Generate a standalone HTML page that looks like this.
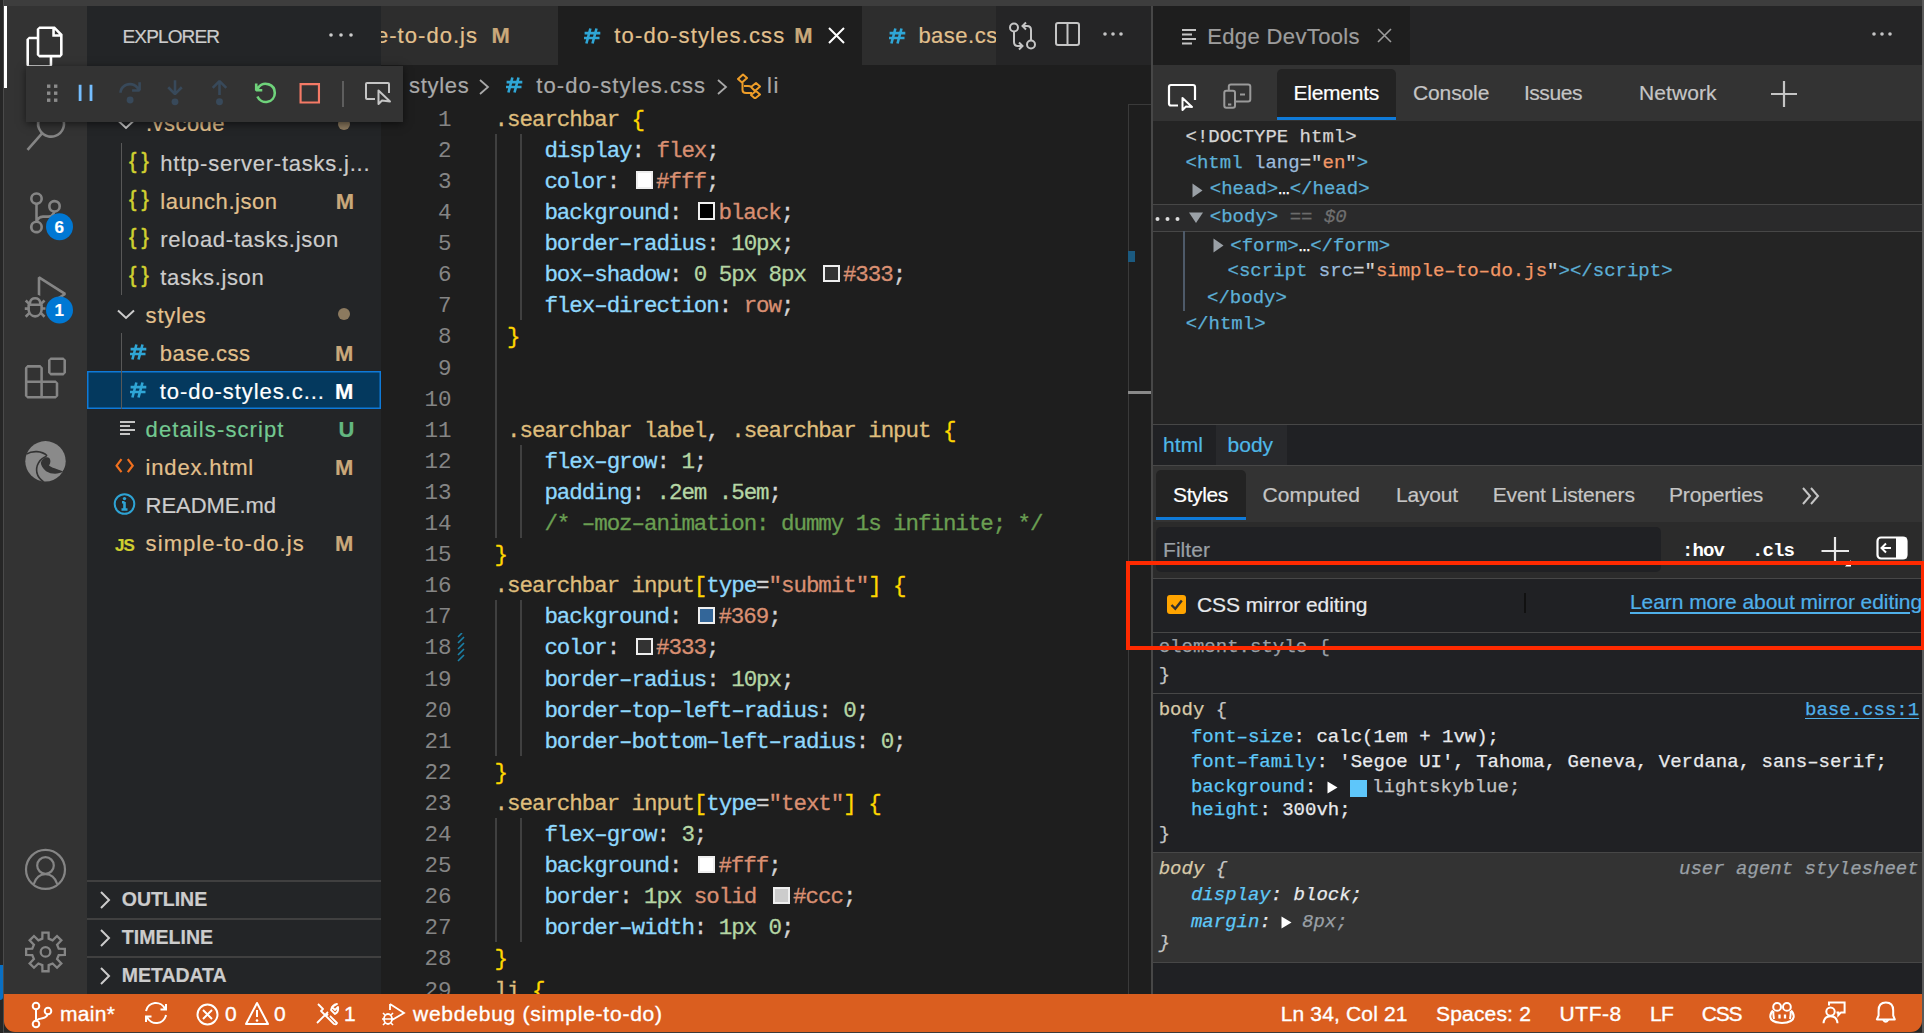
<!DOCTYPE html><html><head><meta charset="utf-8"><style>
*{margin:0;padding:0;box-sizing:content-box}
html,body{width:1924px;height:1033px;overflow:hidden;background:#262626}
body{position:relative;font-family:"Liberation Sans",sans-serif}
.t{position:absolute;white-space:pre}
.ln{position:absolute;left:0;width:70.5px;text-align:right;font-family:"Liberation Mono",monospace;font-size:22.5px;line-height:22.5px;color:#858585;letter-spacing:0;white-space:pre}
.cl{position:absolute;-webkit-text-stroke:0.3px currentColor;font-family:"Liberation Mono",monospace;font-size:22.5px;line-height:22.5px;color:#d4d4d4;letter-spacing:-1.050px;white-space:pre}
.sw{display:inline-block;width:13.3px;height:13.3px;border:2px solid #eeeeee;margin:0 3.05px 0 4.2px;vertical-align:-0.7px;box-sizing:content-box}
.dm{position:absolute;-webkit-text-stroke:0.25px currentColor;font-family:"Liberation Mono",monospace;font-size:19px;line-height:19px;letter-spacing:0.010px;white-space:pre;color:#e8eaed}
</style></head><body><div style="position:absolute;left:0px;top:0px;width:1924px;height:1033px;background:#262626;"></div>
<div style="position:absolute;left:3px;top:0px;width:1px;height:1033px;background:#4a4a4a;"></div>
<div style="position:absolute;left:0px;top:965px;width:3px;height:35px;background:#0a6fc2;border-radius:0 0 3px 0;"></div>
<div style="position:absolute;left:4px;top:0px;width:1918px;height:6px;background:#3d3d3d;"></div>
<div style="position:absolute;left:1922px;top:0px;width:2px;height:1033px;background:#5a5a5a;"></div>
<div style="position:absolute;left:4px;top:6px;width:83px;height:988px;background:#333333;"></div>
<div style="position:absolute;left:4px;top:6px;width:3px;height:82px;background:#ffffff;"></div>
<div style="position:absolute;left:87px;top:6px;width:294px;height:988px;background:#232527;"></div>
<div style="position:absolute;left:381px;top:6px;width:770px;height:988px;background:#1e1e1e;"></div>
<div style="position:absolute;left:1151px;top:6px;width:2px;height:988px;background:#474747;"></div>
<div style="position:absolute;left:1153px;top:6px;width:769px;height:988px;background:#202124;"></div>
<svg style="position:absolute;left:0px;top:0px;" width="90" height="1000" viewBox="0 0 90 1000" fill="none">
<g transform="translate(24.68,26.4) scale(1.724)" fill="#ffffff"><path d="M17.5 0h-9L7 1.5V6H2.5L1 7.5v15.07L2.5 24h12.07L16 22.57V18h4.7l1.3-1.43V4.5L17.5 0zm0 2.12l2.38 2.38H17.5V2.12zm-3 20.38h-12v-15H7v9.07L8.5 18h6v4.5zm6-6h-12v-15H16V6h4.5v10.5z"/></g>
<g transform="translate(24.81,109.48) scale(1.724)" fill="#858585"><path d="M15.25 0a8.25 8.25 0 0 0-6.18 13.72L1 22.88l1.12 1 8.05-9.12A8.251 8.251 0 1 0 15.25.01V0zm0 15a6.75 6.75 0 1 1 0-13.5 6.75 6.75 0 0 1 0 13.5z"/></g>
<g transform="translate(24.76,192.16) scale(1.724)" fill="#858585"><path d="M21.007 8.222A3.738 3.738 0 0 0 15.045 5.2a3.737 3.737 0 0 0 1.156 6.583 2.988 2.988 0 0 1-2.668 1.67h-2.99a4.456 4.456 0 0 0-2.989 1.165V7.4a3.737 3.737 0 1 0-1.494 0v9.117a3.776 3.776 0 1 0 1.816.099 2.99 2.99 0 0 1 2.668-1.667h2.99a4.484 4.484 0 0 0 4.223-3.039 3.736 3.736 0 0 0 3.25-3.687zM4.565 3.738a2.242 2.242 0 1 1 4.484 0 2.242 2.242 0 0 1-4.484 0zm4.484 16.441a2.242 2.242 0 1 1-4.484 0 2.242 2.242 0 0 1 4.484 0zm8.221-9.715a2.242 2.242 0 1 1 0-4.485 2.242 2.242 0 0 1 0 4.485z"/></g>
<g transform="translate(24.78,276.3) scale(1.724)" fill="#858585"><path d="M10.94 13.5l-1.32 1.32a3.73 3.73 0 0 0-7.24 0L1.06 13.5 0 14.56l1.72 1.72-.22.22V18H0v1.5h1.5v.08c.077.489.214.966.41 1.42L0 22.94 1.06 24l1.65-1.65A4.308 4.308 0 0 0 6 24a4.31 4.31 0 0 0 3.29-1.65L10.94 24 12 22.94 10.09 21c.198-.464.336-.951.41-1.45v-.1H12V18h-1.5v-1.5l-.22-.22L12 14.56l-1.06-1.06zM6 13.5a2.25 2.25 0 0 1 2.25 2.25h-4.5A2.25 2.25 0 0 1 6 13.5zm3 6a3.33 3.33 0 0 1-3 3 3.33 3.33 0 0 1-3-3v-2.25h6v2.25zm14.76-9.9v1.26L13.5 17.37V15.6l8.5-5.37L9 2v9.46a5.07 5.07 0 0 0-1.5-.72V.63L8.64 0l15.12 9.6z"/></g>
<g transform="translate(24.9,357.4) scale(1.712)" fill="#858585"><path d="M13.5 1.5L15 0h7.5L24 1.5V9l-1.5 1.5H15L13.5 9V1.5zm1.5 0V9h7.5V1.5H15zM0 15V6l1.5-1.5H9L10.5 6v7.5H18l1.5 1.5v7.5L18 24H1.5L0 22.5V15zm9-1.5V6H1.5v7.5H9zM9 15H1.5v7.5H9V15zm1.5 7.5H18V15h-7.5v7.5z"/></g>
<circle cx="59.5" cy="226.8" r="13.5" fill="#0078d4"/>
<circle cx="59.5" cy="310" r="13.5" fill="#0078d4"/>
<circle cx="45.5" cy="461.3" r="20.2" fill="#8a8a8a"/>
<path d="M26.3,454.2 C32.1,450.5 41.8,450.5 47.1,455.8" stroke="#333" stroke-width="1.6"/>
<path d="M46.6,456.3 C39.4,458.7 35.5,466 36.9,472.8 C37.9,477.1 40.8,480 43.7,481.9" stroke="#333" stroke-width="1.6"/>
<path d="M40.8,462.4 C42.7,457.8 47.1,455.8 49.5,458.3 C51,460.2 50.5,463.6 49,465.5 C51.5,468 56.8,468.4 63.1,471.6 C58.7,474.3 51.5,474.6 46.1,471.2 C42.7,468.4 40.8,465 40.8,462.4 Z" fill="#333"/>
<path d="M62.5,471.6 L66.5,465.5 L67,475 Z" fill="#333"/>
<circle cx="45.5" cy="869.4" r="19.5" stroke="#858585" stroke-width="2.2"/>
<circle cx="45.5" cy="865.5" r="8.3" stroke="#858585" stroke-width="2.2"/>
<path d="M33.8,884 C36,877.5 40,874.2 45.5,874.2 C51,874.2 55,877.5 57.2,884" stroke="#858585" stroke-width="2.2"/>
<path d="M42.33,938.68 L42.43,932.54 L48.57,932.54 L48.67,938.68 L52.61,940.30 L57.02,936.04 L61.36,940.38 L57.10,944.79 L58.72,948.73 L64.86,948.83 L64.86,954.97 L58.72,955.07 L57.10,959.01 L61.36,963.42 L57.02,967.76 L52.61,963.50 L48.67,965.12 L48.57,971.26 L42.43,971.26 L42.33,965.12 L38.39,963.50 L33.98,967.76 L29.64,963.42 L33.90,959.01 L32.28,955.07 L26.14,954.97 L26.14,948.83 L32.28,948.73 L33.90,944.79 L29.64,940.38 L33.98,936.04 L38.39,940.30Z" stroke="#858585" stroke-width="2.3" stroke-linejoin="miter"/>
<circle cx="45.5" cy="951.9" r="4.8" stroke="#858585" stroke-width="2.3"/>
</svg>
<div class="t" style="left:54.5px;top:219.11px;font-size:17px;line-height:17px;color:#fff;font-family:'Liberation Sans',sans-serif;font-weight:700;letter-spacing:0.000px;-webkit-text-stroke:0.2px currentColor;">6</div>
<div class="t" style="left:54.5px;top:302.41px;font-size:17px;line-height:17px;color:#fff;font-family:'Liberation Sans',sans-serif;font-weight:700;letter-spacing:0.000px;-webkit-text-stroke:0.2px currentColor;">1</div>
<div class="t" style="left:122.5px;top:26.91px;font-size:19px;line-height:19px;color:#cccccc;font-family:'Liberation Sans',sans-serif;font-weight:400;letter-spacing:-0.860px;-webkit-text-stroke:0.2px currentColor;">EXPLORER</div>
<svg style="position:absolute;left:326px;top:28px;" width="30" height="12" viewBox="0 0 30 12" fill="none"><circle cx="5" cy="7" r="1.8" fill="#ccc"/><circle cx="15" cy="7" r="1.8" fill="#ccc"/><circle cx="25" cy="7" r="1.8" fill="#ccc"/></svg>
<div style="position:absolute;left:87px;top:371px;width:294px;height:38px;background:#04395e;box-shadow: inset 0 0 0 1.5px #0f7ad8;"></div>
<div style="position:absolute;left:121px;top:143px;width:1.2px;height:152px;background:#585858;"></div>
<div style="position:absolute;left:121px;top:333px;width:1.2px;height:76px;background:#585858;"></div>
<svg style="position:absolute;left:116px;top:117px;" width="20" height="14" viewBox="0 0 20 14" fill="none"><path d="M2,3.5 L10,11 L18,3.5" stroke="#cccccc" stroke-width="2"/></svg>
<div class="t" style="left:146px;top:113.07px;font-size:22px;line-height:22px;color:#e2c08d;font-family:'Liberation Sans',sans-serif;font-weight:400;letter-spacing:0.454px;-webkit-text-stroke:0.2px currentColor;">.vscode</div>
<svg style="position:absolute;left:337px;top:117px;" width="14" height="14" viewBox="0 0 14 14" fill="none"><circle cx="7" cy="7" r="6" fill="#8c7a5f"/></svg>
<div class="t" style="left:129px;top:149.97px;font-size:22px;line-height:22px;color:#d0d030;font-family:'Liberation Sans',sans-serif;font-weight:400;letter-spacing:-0.500px;-webkit-text-stroke:0.5px currentColor;">{ }</div>
<div class="t" style="left:160.3px;top:152.57px;font-size:22px;line-height:22px;color:#cccccc;font-family:'Liberation Sans',sans-serif;font-weight:400;letter-spacing:0.766px;-webkit-text-stroke:0.2px currentColor;">http-server-tasks.j...</div>
<div class="t" style="left:129px;top:187.97px;font-size:22px;line-height:22px;color:#d0d030;font-family:'Liberation Sans',sans-serif;font-weight:400;letter-spacing:-0.500px;-webkit-text-stroke:0.5px currentColor;">{ }</div>
<div class="t" style="left:160.3px;top:190.57px;font-size:22px;line-height:22px;color:#e2c08d;font-family:'Liberation Sans',sans-serif;font-weight:400;letter-spacing:0.545px;-webkit-text-stroke:0.2px currentColor;">launch.json</div>
<div class="t" style="left:335.7px;top:190.57px;font-size:22px;line-height:22px;color:#c9a87a;font-family:'Liberation Sans',sans-serif;font-weight:700;letter-spacing:-2.027px;-webkit-text-stroke:0.2px currentColor;">M</div>
<div class="t" style="left:129px;top:225.97px;font-size:22px;line-height:22px;color:#d0d030;font-family:'Liberation Sans',sans-serif;font-weight:400;letter-spacing:-0.500px;-webkit-text-stroke:0.5px currentColor;">{ }</div>
<div class="t" style="left:160.3px;top:228.57px;font-size:22px;line-height:22px;color:#cccccc;font-family:'Liberation Sans',sans-serif;font-weight:400;letter-spacing:0.729px;-webkit-text-stroke:0.2px currentColor;">reload-tasks.json</div>
<div class="t" style="left:129px;top:263.97px;font-size:22px;line-height:22px;color:#d0d030;font-family:'Liberation Sans',sans-serif;font-weight:400;letter-spacing:-0.500px;-webkit-text-stroke:0.5px currentColor;">{ }</div>
<div class="t" style="left:160.3px;top:266.57px;font-size:22px;line-height:22px;color:#cccccc;font-family:'Liberation Sans',sans-serif;font-weight:400;letter-spacing:0.618px;-webkit-text-stroke:0.2px currentColor;">tasks.json</div>
<svg style="position:absolute;left:116px;top:307px;" width="20" height="14" viewBox="0 0 20 14" fill="none"><path d="M2,3.5 L10,11 L18,3.5" stroke="#cccccc" stroke-width="2"/></svg>
<div class="t" style="left:145.6px;top:304.57px;font-size:22px;line-height:22px;color:#e2c08d;font-family:'Liberation Sans',sans-serif;font-weight:400;letter-spacing:0.794px;-webkit-text-stroke:0.2px currentColor;">styles</div>
<svg style="position:absolute;left:337px;top:307px;" width="14" height="14" viewBox="0 0 14 14" fill="none"><circle cx="7" cy="7" r="6" fill="#8c7a5f"/></svg>
<svg style="position:absolute;left:129px;top:343px;" width="19" height="19" viewBox="0 0 19 19" fill="none"><path d="M7.4,1.5 L3.4,16.5 M13.5,1.5 L9.5,16.5 M1.6,6.1 H17.3 M1,11 H16.5" stroke="#2fa6d6" stroke-width="2.6"/></svg>
<div class="t" style="left:159.8px;top:342.57px;font-size:22px;line-height:22px;color:#e2c08d;font-family:'Liberation Sans',sans-serif;font-weight:400;letter-spacing:0.498px;-webkit-text-stroke:0.2px currentColor;">base.css</div>
<div class="t" style="left:335px;top:342.57px;font-size:22px;line-height:22px;color:#c9a87a;font-family:'Liberation Sans',sans-serif;font-weight:700;letter-spacing:-1.327px;-webkit-text-stroke:0.2px currentColor;">M</div>
<svg style="position:absolute;left:129px;top:381px;" width="19" height="19" viewBox="0 0 19 19" fill="none"><path d="M7.4,1.5 L3.4,16.5 M13.5,1.5 L9.5,16.5 M1.6,6.1 H17.3 M1,11 H16.5" stroke="#2fa6d6" stroke-width="2.6"/></svg>
<div class="t" style="left:159.8px;top:380.57px;font-size:22px;line-height:22px;color:#ffffff;font-family:'Liberation Sans',sans-serif;font-weight:400;letter-spacing:0.932px;-webkit-text-stroke:0.2px currentColor;">to-do-styles.c...</div>
<div class="t" style="left:335px;top:380.57px;font-size:22px;line-height:22px;color:#ffffff;font-family:'Liberation Sans',sans-serif;font-weight:700;letter-spacing:-1.327px;-webkit-text-stroke:0.2px currentColor;">M</div>
<svg style="position:absolute;left:119px;top:420px;" width="18" height="16" viewBox="0 0 18 16" fill="none"><path d="M1,2 H16 M1,6 H11 M1,10 H16 M1,14 H11" stroke="#c5c5c5" stroke-width="2"/></svg>
<div class="t" style="left:145.6px;top:418.57px;font-size:22px;line-height:22px;color:#73c991;font-family:'Liberation Sans',sans-serif;font-weight:400;letter-spacing:1.108px;-webkit-text-stroke:0.2px currentColor;">details-script</div>
<div class="t" style="left:338.6px;top:418.57px;font-size:22px;line-height:22px;color:#63b680;font-family:'Liberation Sans',sans-serif;font-weight:700;letter-spacing:-2.488px;-webkit-text-stroke:0.2px currentColor;">U</div>
<svg style="position:absolute;left:114px;top:457px;" width="22" height="18" viewBox="0 0 22 18" fill="none"><path d="M7.5,2.2 L2.6,8.7 L7.5,15.2 M13.8,2.2 L18.7,8.7 L13.8,15.2" stroke="#f0701f" stroke-width="2.2"/></svg>
<div class="t" style="left:145.6px;top:456.57px;font-size:22px;line-height:22px;color:#e2c08d;font-family:'Liberation Sans',sans-serif;font-weight:400;letter-spacing:0.813px;-webkit-text-stroke:0.2px currentColor;">index.html</div>
<div class="t" style="left:335px;top:456.57px;font-size:22px;line-height:22px;color:#c9a87a;font-family:'Liberation Sans',sans-serif;font-weight:700;letter-spacing:-1.327px;-webkit-text-stroke:0.2px currentColor;">M</div>
<svg style="position:absolute;left:112px;top:492px;" width="24" height="24" viewBox="0 0 24 24" fill="none"><circle cx="12.5" cy="12" r="9.8" stroke="#2ea3d4" stroke-width="2"/><path d="M12.5,10 V17.5 M9.5,17.5 H15.5 M10,10.2 H12.5" stroke="#2ea3d4" stroke-width="2.6"/><circle cx="12.5" cy="6.6" r="1.7" fill="#2ea3d4"/></svg>
<div class="t" style="left:145.6px;top:494.57px;font-size:22px;line-height:22px;color:#cccccc;font-family:'Liberation Sans',sans-serif;font-weight:400;letter-spacing:-0.045px;-webkit-text-stroke:0.2px currentColor;">README.md</div>
<div class="t" style="left:115px;top:536.81px;font-size:17px;line-height:17px;color:#d0d030;font-family:'Liberation Sans',sans-serif;font-weight:700;letter-spacing:-0.897px;-webkit-text-stroke:0.2px currentColor;">JS</div>
<div class="t" style="left:145.6px;top:532.57px;font-size:22px;line-height:22px;color:#e2c08d;font-family:'Liberation Sans',sans-serif;font-weight:400;letter-spacing:1.077px;-webkit-text-stroke:0.2px currentColor;">simple-to-do.js</div>
<div class="t" style="left:335px;top:532.57px;font-size:22px;line-height:22px;color:#c9a87a;font-family:'Liberation Sans',sans-serif;font-weight:700;letter-spacing:-1.327px;-webkit-text-stroke:0.2px currentColor;">M</div>
<div style="position:absolute;left:87px;top:880px;width:294px;height:1.5px;background:#404040;"></div>
<svg style="position:absolute;left:98px;top:890px;" width="14" height="20" viewBox="0 0 14 20" fill="none"><path d="M3,2 L11,10 L3,18" stroke="#cccccc" stroke-width="2"/></svg>
<div class="t" style="left:121.8px;top:890.49px;font-size:19.5px;line-height:19.5px;color:#cccccc;font-family:'Liberation Sans',sans-serif;font-weight:700;letter-spacing:-0.040px;-webkit-text-stroke:0.2px currentColor;">OUTLINE</div>
<div style="position:absolute;left:87px;top:918px;width:294px;height:1.5px;background:#404040;"></div>
<svg style="position:absolute;left:98px;top:928px;" width="14" height="20" viewBox="0 0 14 20" fill="none"><path d="M3,2 L11,10 L3,18" stroke="#cccccc" stroke-width="2"/></svg>
<div class="t" style="left:121.8px;top:928.49px;font-size:19.5px;line-height:19.5px;color:#cccccc;font-family:'Liberation Sans',sans-serif;font-weight:700;letter-spacing:0.038px;-webkit-text-stroke:0.2px currentColor;">TIMELINE</div>
<div style="position:absolute;left:87px;top:956px;width:294px;height:1.5px;background:#404040;"></div>
<svg style="position:absolute;left:98px;top:966px;" width="14" height="20" viewBox="0 0 14 20" fill="none"><path d="M3,2 L11,10 L3,18" stroke="#cccccc" stroke-width="2"/></svg>
<div class="t" style="left:121.8px;top:966.49px;font-size:19.5px;line-height:19.5px;color:#cccccc;font-family:'Liberation Sans',sans-serif;font-weight:700;letter-spacing:-0.045px;-webkit-text-stroke:0.2px currentColor;">METADATA</div>
<div style="position:absolute;left:381px;top:6px;width:770px;height:59px;background:#252526;"></div>
<div style="position:absolute;left:381px;top:6px;width:177px;height:59px;background:#2d2d2d;"></div>
<div style="position:absolute;left:558px;top:6px;width:304px;height:59px;background:#1e1e1e;"></div>
<div style="position:absolute;left:862px;top:6px;width:134px;height:59px;background:#2d2d2d;"></div>
<div style="position:absolute;left:381px;top:6px;width:177px;height:59px;overflow:hidden">
<div class="t" style="left:-5px;top:19.07px;font-size:22px;line-height:22px;color:#e2c08d;font-family:'Liberation Sans',sans-serif;font-weight:400;letter-spacing:1.029px;-webkit-text-stroke:0.2px currentColor;">e-to-do.js</div>
<div class="t" style="left:110.6px;top:19.07px;font-size:22px;line-height:22px;color:#c9a87a;font-family:'Liberation Sans',sans-serif;font-weight:700;letter-spacing:-2.727px;-webkit-text-stroke:0.2px currentColor;">M</div>
</div>
<svg style="position:absolute;left:583px;top:26.700000000000003px;" width="19" height="19" viewBox="0 0 19 19" fill="none"><path d="M7.4,1.5 L3.4,16.5 M13.5,1.5 L9.5,16.5 M1.6,6.1 H17.3 M1,11 H16.5" stroke="#2fa6d6" stroke-width="2.6"/></svg>
<div class="t" style="left:614.3px;top:25.07px;font-size:22px;line-height:22px;color:#e2c08d;font-family:'Liberation Sans',sans-serif;font-weight:400;letter-spacing:1.136px;-webkit-text-stroke:0.2px currentColor;">to-do-styles.css</div>
<div class="t" style="left:794.3px;top:25.07px;font-size:22px;line-height:22px;color:#c9a87a;font-family:'Liberation Sans',sans-serif;font-weight:700;letter-spacing:-1.027px;-webkit-text-stroke:0.2px currentColor;">M</div>
<svg style="position:absolute;left:827px;top:26px;" width="19" height="19" viewBox="0 0 19 19" fill="none"><path d="M2,2 L17,17 M17,2 L2,17" stroke="#ffffff" stroke-width="2"/></svg>
<div style="position:absolute;left:862px;top:6px;width:134px;height:59px;overflow:hidden">
<svg style="position:absolute;left:26px;top:20.700000000000003px;" width="19" height="19" viewBox="0 0 19 19" fill="none"><path d="M7.4,1.5 L3.4,16.5 M13.5,1.5 L9.5,16.5 M1.6,6.1 H17.3 M1,11 H16.5" stroke="#2fa6d6" stroke-width="2.6"/></svg>
<div class="t" style="left:56.39999999999998px;top:19.07px;font-size:22px;line-height:22px;color:#e2c08d;font-family:'Liberation Sans',sans-serif;font-weight:400;letter-spacing:0.498px;-webkit-text-stroke:0.2px currentColor;">base.css</div>
</div>
<svg style="position:absolute;left:1006px;top:20px;" width="34" height="32" viewBox="0 0 34 32" fill="none"><circle cx="8" cy="7.5" r="4" stroke="#c5c5c5" stroke-width="2"/><circle cx="25" cy="24.5" r="4" stroke="#c5c5c5" stroke-width="2"/><path d="M8,11.5 V22 Q8,26 12,26 H16 M13,22.5 L16.5,26 L13,29.5 M25,20.5 V10 Q25,6 21,6 H17 M20,2.5 L16.5,6 L20,9.5" stroke="#c5c5c5" stroke-width="2"/></svg>
<svg style="position:absolute;left:1054px;top:21px;" width="28" height="27" viewBox="0 0 28 27" fill="none"><rect x="2" y="2" width="23" height="22" rx="2" stroke="#c5c5c5" stroke-width="2"/><path d="M13.5,2 V24" stroke="#c5c5c5" stroke-width="2"/></svg>
<svg style="position:absolute;left:1101px;top:28px;" width="28" height="12" viewBox="0 0 28 12" fill="none"><circle cx="4" cy="6" r="1.8" fill="#c5c5c5"/><circle cx="12" cy="6" r="1.8" fill="#c5c5c5"/><circle cx="20" cy="6" r="1.8" fill="#c5c5c5"/></svg>
<div class="t" style="left:409px;top:74.67px;font-size:22px;line-height:22px;color:#a9a9a9;font-family:'Liberation Sans',sans-serif;font-weight:400;letter-spacing:0.694px;-webkit-text-stroke:0.2px currentColor;">styles</div>
<svg style="position:absolute;left:478px;top:78.5px;" width="12" height="16" viewBox="0 0 12 16" fill="none"><path d="M2,1 L10,8.0 L2,15" stroke="#a9a9a9" stroke-width="1.8"/></svg>
<svg style="position:absolute;left:505px;top:76px;" width="19" height="19" viewBox="0 0 19 19" fill="none"><path d="M7.4,1.5 L3.4,16.5 M13.5,1.5 L9.5,16.5 M1.6,6.1 H17.3 M1,11 H16.5" stroke="#2fa6d6" stroke-width="2.6"/></svg>
<div class="t" style="left:536.3px;top:74.67px;font-size:22px;line-height:22px;color:#a9a9a9;font-family:'Liberation Sans',sans-serif;font-weight:400;letter-spacing:1.067px;-webkit-text-stroke:0.2px currentColor;">to-do-styles.css</div>
<svg style="position:absolute;left:716px;top:78.5px;" width="12" height="16" viewBox="0 0 12 16" fill="none"><path d="M2,1 L10,8.0 L2,15" stroke="#a9a9a9" stroke-width="1.8"/></svg>
<svg style="position:absolute;left:735px;top:73px;" width="28" height="26" viewBox="0 0 28 26" fill="none"><path d="M3,6 L8,1.5 L12,5 L7,9.5 Z M16,14 L21,10 L25,13.5 L20,18 Z M16,22 L21,18 L25,21.5 L20,25.5 Z M7.5,9.5 V17 Q7.5,20 11,20 H17 M9,13 H13 Q15,13 16.5,14" stroke="#ee9d28" stroke-width="2" stroke-linejoin="round"/></svg>
<div class="t" style="left:767px;top:74.67px;font-size:22px;line-height:22px;color:#a9a9a9;font-family:'Liberation Sans',sans-serif;font-weight:400;letter-spacing:1.612px;-webkit-text-stroke:0.2px currentColor;">li</div>
<div style="position:absolute;left:494.90000000000003px;top:133.8px;width:1.8px;height:404.3px;background:#404040;"></div>
<div style="position:absolute;left:494.90000000000003px;top:600.3px;width:1.8px;height:155.5px;background:#404040;"></div>
<div style="position:absolute;left:494.90000000000003px;top:818.0px;width:1.8px;height:124.4px;background:#404040;"></div>
<div style="position:absolute;left:519.8px;top:133.8px;width:1.8px;height:186.6px;background:#404040;"></div>
<div style="position:absolute;left:519.8px;top:444.8px;width:1.8px;height:93.3px;background:#404040;"></div>
<div style="position:absolute;left:519.8px;top:600.3px;width:1.8px;height:155.5px;background:#404040;"></div>
<div style="position:absolute;left:519.8px;top:818.0px;width:1.8px;height:124.4px;background:#404040;"></div>
<div style="position:absolute;left:381px;top:102px;width:770px;height:892px;overflow:hidden">
<div class="ln" style="top:6.76px">1</div>
<div class="cl" style="left:113.60000000000002px;top:6.76px"><span style="color:#dfbd7c">.searchbar</span> <span style="color:#ffd700">{</span></div>
<div class="ln" style="top:37.86px">2</div>
<div class="cl" style="left:113.60000000000002px;top:37.86px">    <span style="color:#8fd8fd">display</span><span style="color:#d4d4d4">: </span><span style="color:#d98f72">flex</span><span style="color:#d4d4d4">;</span></div>
<div class="ln" style="top:68.96px">3</div>
<div class="cl" style="left:113.60000000000002px;top:68.96px">    <span style="color:#8fd8fd">color</span><span style="color:#d4d4d4">: </span><span class="sw" style="background:#ffffff"></span><span style="color:#d98f72">#fff</span><span style="color:#d4d4d4">;</span></div>
<div class="ln" style="top:100.06px">4</div>
<div class="cl" style="left:113.60000000000002px;top:100.06px">    <span style="color:#8fd8fd">background</span><span style="color:#d4d4d4">: </span><span class="sw" style="background:#000000"></span><span style="color:#d98f72">black</span><span style="color:#d4d4d4">;</span></div>
<div class="ln" style="top:131.16px">5</div>
<div class="cl" style="left:113.60000000000002px;top:131.16px">    <span style="color:#8fd8fd">border–radius</span><span style="color:#d4d4d4">: </span><span style="color:#b5d6a4">10px</span><span style="color:#d4d4d4">;</span></div>
<div class="ln" style="top:162.26px">6</div>
<div class="cl" style="left:113.60000000000002px;top:162.26px">    <span style="color:#8fd8fd">box–shadow</span><span style="color:#d4d4d4">: </span><span style="color:#b5d6a4">0 5px 8px </span><span class="sw" style="background:#333333"></span><span style="color:#d98f72">#333</span><span style="color:#d4d4d4">;</span></div>
<div class="ln" style="top:193.36px">7</div>
<div class="cl" style="left:113.60000000000002px;top:193.36px">    <span style="color:#8fd8fd">flex–direction</span><span style="color:#d4d4d4">: </span><span style="color:#d98f72">row</span><span style="color:#d4d4d4">;</span></div>
<div class="ln" style="top:224.46px">8</div>
<div class="cl" style="left:113.60000000000002px;top:224.46px"> <span style="color:#ffd700">}</span></div>
<div class="ln" style="top:255.56px">9</div>
<div class="ln" style="top:286.66px">10</div>
<div class="ln" style="top:317.76px">11</div>
<div class="cl" style="left:113.60000000000002px;top:317.76px"> <span style="color:#dfbd7c">.searchbar label</span><span style="color:#d4d4d4">, </span><span style="color:#dfbd7c">.searchbar input</span> <span style="color:#ffd700">{</span></div>
<div class="ln" style="top:348.86px">12</div>
<div class="cl" style="left:113.60000000000002px;top:348.86px">    <span style="color:#8fd8fd">flex–grow</span><span style="color:#d4d4d4">: </span><span style="color:#b5d6a4">1</span><span style="color:#d4d4d4">;</span></div>
<div class="ln" style="top:379.96px">13</div>
<div class="cl" style="left:113.60000000000002px;top:379.96px">    <span style="color:#8fd8fd">padding</span><span style="color:#d4d4d4">: </span><span style="color:#b5d6a4">.2em .5em</span><span style="color:#d4d4d4">;</span></div>
<div class="ln" style="top:411.06px">14</div>
<div class="cl" style="left:113.60000000000002px;top:411.06px">    <span style="color:#6a9f52">/* –moz–animation: dummy 1s infinite; */</span></div>
<div class="ln" style="top:442.16px">15</div>
<div class="cl" style="left:113.60000000000002px;top:442.16px"><span style="color:#ffd700">}</span></div>
<div class="ln" style="top:473.26px">16</div>
<div class="cl" style="left:113.60000000000002px;top:473.26px"><span style="color:#dfbd7c">.searchbar input</span><span style="color:#ffd700">[</span><span style="color:#8fd8fd">type</span><span style="color:#d4d4d4">=</span><span style="color:#d98f72">&quot;submit&quot;</span><span style="color:#ffd700">]</span> <span style="color:#ffd700">{</span></div>
<div class="ln" style="top:504.36px">17</div>
<div class="cl" style="left:113.60000000000002px;top:504.36px">    <span style="color:#8fd8fd">background</span><span style="color:#d4d4d4">: </span><span class="sw" style="background:#336699"></span><span style="color:#d98f72">#369</span><span style="color:#d4d4d4">;</span></div>
<div class="ln" style="top:535.46px">18</div>
<div class="cl" style="left:113.60000000000002px;top:535.46px">    <span style="color:#8fd8fd">color</span><span style="color:#d4d4d4">: </span><span class="sw" style="background:#333333"></span><span style="color:#d98f72">#333</span><span style="color:#d4d4d4">;</span></div>
<div class="ln" style="top:566.56px">19</div>
<div class="cl" style="left:113.60000000000002px;top:566.56px">    <span style="color:#8fd8fd">border–radius</span><span style="color:#d4d4d4">: </span><span style="color:#b5d6a4">10px</span><span style="color:#d4d4d4">;</span></div>
<div class="ln" style="top:597.66px">20</div>
<div class="cl" style="left:113.60000000000002px;top:597.66px">    <span style="color:#8fd8fd">border–top–left–radius</span><span style="color:#d4d4d4">: </span><span style="color:#b5d6a4">0</span><span style="color:#d4d4d4">;</span></div>
<div class="ln" style="top:628.76px">21</div>
<div class="cl" style="left:113.60000000000002px;top:628.76px">    <span style="color:#8fd8fd">border–bottom–left–radius</span><span style="color:#d4d4d4">: </span><span style="color:#b5d6a4">0</span><span style="color:#d4d4d4">;</span></div>
<div class="ln" style="top:659.86px">22</div>
<div class="cl" style="left:113.60000000000002px;top:659.86px"><span style="color:#ffd700">}</span></div>
<div class="ln" style="top:690.96px">23</div>
<div class="cl" style="left:113.60000000000002px;top:690.96px"><span style="color:#dfbd7c">.searchbar input</span><span style="color:#ffd700">[</span><span style="color:#8fd8fd">type</span><span style="color:#d4d4d4">=</span><span style="color:#d98f72">&quot;text&quot;</span><span style="color:#ffd700">]</span> <span style="color:#ffd700">{</span></div>
<div class="ln" style="top:722.06px">24</div>
<div class="cl" style="left:113.60000000000002px;top:722.06px">    <span style="color:#8fd8fd">flex–grow</span><span style="color:#d4d4d4">: </span><span style="color:#b5d6a4">3</span><span style="color:#d4d4d4">;</span></div>
<div class="ln" style="top:753.16px">25</div>
<div class="cl" style="left:113.60000000000002px;top:753.16px">    <span style="color:#8fd8fd">background</span><span style="color:#d4d4d4">: </span><span class="sw" style="background:#ffffff"></span><span style="color:#d98f72">#fff</span><span style="color:#d4d4d4">;</span></div>
<div class="ln" style="top:784.26px">26</div>
<div class="cl" style="left:113.60000000000002px;top:784.26px">    <span style="color:#8fd8fd">border</span><span style="color:#d4d4d4">: </span><span style="color:#b5d6a4">1px </span><span style="color:#d98f72">solid </span><span class="sw" style="background:#cccccc"></span><span style="color:#d98f72">#ccc</span><span style="color:#d4d4d4">;</span></div>
<div class="ln" style="top:815.36px">27</div>
<div class="cl" style="left:113.60000000000002px;top:815.36px">    <span style="color:#8fd8fd">border–width</span><span style="color:#d4d4d4">: </span><span style="color:#b5d6a4">1px 0</span><span style="color:#d4d4d4">;</span></div>
<div class="ln" style="top:846.46px">28</div>
<div class="cl" style="left:113.60000000000002px;top:846.46px"><span style="color:#ffd700">}</span></div>
<div class="ln" style="top:877.56px">29</div>
<div class="cl" style="left:113.60000000000002px;top:877.56px"><span style="color:#dfbd7c">li</span> <span style="color:#ffd700">{</span></div>
</div>
<div style="position:absolute;left:1127.5px;top:104px;width:1.2px;height:890px;background:#3a3a3a;"></div>
<div style="position:absolute;left:1128px;top:104px;width:23px;height:1.2px;background:#3a3a3a;"></div>
<div style="position:absolute;left:1128px;top:251px;width:7px;height:11px;background:#1b5a80;"></div>
<div style="position:absolute;left:1128px;top:391px;width:23px;height:3px;background:#8a8a8a;"></div>
<svg style="position:absolute;left:456px;top:633px;" width="10" height="30" viewBox="0 0 10 30" fill="none"><path d="M2,28 L8,22 M2,22 L8,16 M2,16 L8,10 M2,10 L8,4 M2,4 L6,0" stroke="#1b81a8" stroke-width="1.6"/></svg>
<div style="position:absolute;left:26px;top:66px;width:377px;height:56px;background:#333333;box-shadow:0 2px 8px rgba(0,0,0,0.55);"></div>
<svg style="position:absolute;left:26px;top:66px;" width="377" height="56" viewBox="0 0 377 56" fill="none">
<g fill="#8b8b8b"><rect x="21" y="18.5" width="3.4" height="3.4"/><rect x="28" y="18.5" width="3.4" height="3.4"/><rect x="21" y="25.5" width="3.4" height="3.4"/><rect x="28" y="25.5" width="3.4" height="3.4"/><rect x="21" y="32.5" width="3.4" height="3.4"/><rect x="28" y="32.5" width="3.4" height="3.4"/></g>
<path d="M54.1,18.7 V35 M65,18.7 V35" stroke="#75beff" stroke-width="2.8"/>
<g transform="translate(90.26,13.24) scale(1.73)" fill="#38495a"><path d="M14.25 5.750v-4h-1.5v2.542c-1.145-1.359-2.911-2.209-4.84-2.209-3.177 0-5.920 2.307-6.160 5.398l-.02.269h1.501l.022-.226c.212-2.195 2.202-3.940 4.656-3.940 1.736 0 3.244.875 4.050 2.166h-2.830v1.5h4.163l.962-.975V5.750h.037zM8 14a2 2 0 1 1 0-4 2 2 0 0 1 0 4z"/></g>
<g transform="translate(135.16,12.45) scale(1.73)" fill="#38495a"><path d="M8 9.532h.542l3.905-3.905-1.061-1.060-2.637 2.635V1H7.251v6.202L4.615 4.567l-1.060 1.060 3.904 3.905H8zm2 4a2 2 0 1 1-4 0 2 2 0 0 1 4 0z"/></g>
<g transform="translate(179.66,12.45) scale(1.73)" fill="#38495a"><path d="M8 1h-.542L3.553 4.905l1.061 1.060 2.637-2.635V9.532h1.498V3.330l2.636 2.635 1.060-1.060L8.542 1H8zm2 12.5a2 2 0 1 1-4 0 2 2 0 0 1 4 0z"/></g>
<g transform="translate(225.46,13.06) scale(1.73)" fill="#6fd37b"><path d="M12.75 8a4.5 4.5 0 0 1-8.610 1.834l-1.391.565A6.001 6.001 0 0 0 14.250 8 6 6 0 0 0 3.5 4.334V2.5H2v4l.75.75h3.5v-1.5H4.352A4.5 4.5 0 0 1 12.750 8z"/></g>
<g transform="translate(270.08,13.58) scale(1.71)" fill="#f47a66"><path d="M2 2v12h12V2H2zm10.750 10.750h-9.5v-9.5h9.5v9.5z"/></g>
<path d="M317,15 V41" stroke="#6a6a6a" stroke-width="1.6"/>
<path d="M349,33 H341 Q340,33 340,32 V18 Q340,17 341,17 H362 Q363,17 363,18 V27" stroke="#c5c5c5" stroke-width="2"/><path d="M352.5,24.5 V38 L356,34.5 L364,35.5 Z" stroke="#c5c5c5" stroke-width="2" stroke-linejoin="round"/>
</svg>
<div style="position:absolute;left:1153px;top:6px;width:769px;height:59px;background:#252526;"></div>
<div style="position:absolute;left:1153px;top:6px;width:257px;height:59px;background:#1e1e1e;"></div>
<svg style="position:absolute;left:1181px;top:28px;" width="16" height="17" viewBox="0 0 16 17" fill="none"><path d="M1,2 H15 M1,6.5 H11 M1,11 H15 M1,15.5 H11" stroke="#c5c5c5" stroke-width="1.8"/></svg>
<div class="t" style="left:1207.2px;top:25.67px;font-size:22px;line-height:22px;color:#9d9d9d;font-family:'Liberation Sans',sans-serif;font-weight:400;letter-spacing:0.371px;-webkit-text-stroke:0.2px currentColor;">Edge DevTools</div>
<svg style="position:absolute;left:1376px;top:27px;" width="17" height="17" viewBox="0 0 17 17" fill="none"><path d="M2,2 L15,15 M15,2 L2,15" stroke="#9d9d9d" stroke-width="1.6"/></svg>
<svg style="position:absolute;left:1870px;top:28px;" width="28" height="12" viewBox="0 0 28 12" fill="none"><circle cx="4" cy="6" r="1.8" fill="#c5c5c5"/><circle cx="12" cy="6" r="1.8" fill="#c5c5c5"/><circle cx="20" cy="6" r="1.8" fill="#c5c5c5"/></svg>
<div style="position:absolute;left:1153px;top:65px;width:769px;height:56px;background:#333333;"></div>
<div style="position:absolute;left:1153px;top:121px;width:769px;height:303px;background:#242424;"></div>
<div style="position:absolute;left:1277px;top:69px;width:119px;height:51px;background:#232323;border-radius:5px 5px 0 0;"></div>
<div style="position:absolute;left:1277px;top:117px;width:119px;height:3px;background:#0f7ad8;"></div>
<svg style="position:absolute;left:1165px;top:82px;" width="36" height="30" viewBox="0 0 36 30" fill="none"><path d="M13,23.5 H6 Q4,23.5 4,21.5 V5 Q4,3 6,3 H28 Q30,3 30,5 V18" stroke="#ffffff" stroke-width="2.2"/><path d="M17.5,16 V28 L21,24.5 L27,25 Z" stroke="#ffffff" stroke-width="2" stroke-linejoin="round"/></svg>
<svg style="position:absolute;left:1219px;top:81px;" width="36" height="32" viewBox="0 0 36 32" fill="none"><rect x="9.8" y="3.4" width="21.5" height="17" rx="2.2" stroke="#9a9a9a" stroke-width="2"/><rect x="5.3" y="9.8" width="10.7" height="16.9" rx="2" stroke="#9a9a9a" stroke-width="2" fill="#333"/><path d="M9,23.5 H12.3 M21,13.5 H26" stroke="#9a9a9a" stroke-width="2"/></svg>
<div class="t" style="left:1293.5px;top:82.22px;font-size:21px;line-height:21px;color:#ffffff;font-family:'Liberation Sans',sans-serif;font-weight:400;letter-spacing:-0.255px;-webkit-text-stroke:0.2px currentColor;">Elements</div>
<div class="t" style="left:1413px;top:82.22px;font-size:21px;line-height:21px;color:#c5c5c5;font-family:'Liberation Sans',sans-serif;font-weight:400;letter-spacing:-0.121px;-webkit-text-stroke:0.2px currentColor;">Console</div>
<div class="t" style="left:1523.9px;top:82.22px;font-size:21px;line-height:21px;color:#c5c5c5;font-family:'Liberation Sans',sans-serif;font-weight:400;letter-spacing:-0.432px;-webkit-text-stroke:0.2px currentColor;">Issues</div>
<div class="t" style="left:1639px;top:82.22px;font-size:21px;line-height:21px;color:#c5c5c5;font-family:'Liberation Sans',sans-serif;font-weight:400;letter-spacing:0.083px;-webkit-text-stroke:0.2px currentColor;">Network</div>
<svg style="position:absolute;left:1769px;top:79px;" width="30" height="30" viewBox="0 0 30 30" fill="none"><path d="M15,2 V28 M2,15 H28" stroke="#c5c5c5" stroke-width="2.2"/></svg>
<div style="position:absolute;left:1153px;top:204px;width:769px;height:27.5px;background:#2a2a2b;"></div>
<div style="position:absolute;left:1153px;top:204px;width:769px;height:1.2px;background:#474747;"></div>
<div style="position:absolute;left:1153px;top:230.8px;width:769px;height:1.2px;background:#474747;"></div>
<div style="position:absolute;left:1183px;top:231px;width:1.6px;height:80px;background:#4e5a69;"></div>
<div class="dm" style="left:1185.5px;top:128.44px"><span style="color:#d5d5d5">&lt;!DOCTYPE html&gt;</span></div>
<div class="dm" style="left:1185.5px;top:154.44px"><span style="color:#5db0d7">&lt;html </span><span style="color:#9bbbdc">lang</span><span style="color:#d5d5d5">=&quot;</span><span style="color:#f29766">en</span><span style="color:#d5d5d5">&quot;</span><span style="color:#5db0d7">&gt;</span></div>
<svg style="position:absolute;left:1191px;top:182px;" width="13" height="17" viewBox="0 0 13 17" fill="none"><path d="M1.5,1.5 L11.5,8.5 L1.5,15.5 Z" fill="#9aa0a6"/></svg>
<div class="dm" style="left:1209.8px;top:180.44px"><span style="color:#5db0d7">&lt;head&gt;</span><span style="color:#ffffff">…</span><span style="color:#5db0d7">&lt;/head&gt;</span></div>
<svg style="position:absolute;left:1155px;top:216.3px;" width="28" height="6" viewBox="0 0 28 6" fill="none"><circle cx="2.5" cy="3" r="2" fill="#ddd"/><circle cx="12.5" cy="3" r="2" fill="#ddd"/><circle cx="22.5" cy="3" r="2" fill="#ddd"/></svg>
<svg style="position:absolute;left:1188px;top:211px;" width="16" height="13" viewBox="0 0 16 13" fill="none"><path d="M1,1.5 L15,1.5 L8,12 Z" fill="#9aa0a6"/></svg>
<div class="dm" style="left:1209.8px;top:208.14px"><span style="color:#5db0d7">&lt;body&gt;</span><span style="color:#6b6b6b"> == </span><span style="color:#707070;font-style:italic">$0</span></div>
<svg style="position:absolute;left:1212px;top:237px;" width="13" height="17" viewBox="0 0 13 17" fill="none"><path d="M1.5,1.5 L11.5,8.5 L1.5,15.5 Z" fill="#9aa0a6"/></svg>
<div class="dm" style="left:1230.3px;top:236.74px"><span style="color:#5db0d7">&lt;form&gt;</span><span style="color:#ffffff">…</span><span style="color:#5db0d7">&lt;/form&gt;</span></div>
<div class="dm" style="left:1227.5px;top:262.44px"><span style="color:#5db0d7">&lt;script </span><span style="color:#9bbbdc">src</span><span style="color:#d5d5d5">=&quot;</span><span style="color:#f29766">simple–to–do.js</span><span style="color:#d5d5d5">&quot;</span><span style="color:#5db0d7">&gt;&lt;/script&gt;</span></div>
<div class="dm" style="left:1207px;top:288.84px"><span style="color:#5db0d7">&lt;/body&gt;</span></div>
<div class="dm" style="left:1185.7px;top:314.94px"><span style="color:#5db0d7">&lt;/html&gt;</span></div>
<div style="position:absolute;left:1153px;top:424px;width:769px;height:1.2px;background:#474747;"></div>
<div style="position:absolute;left:1216px;top:425px;width:71px;height:40px;background:#28292c;"></div>
<div class="t" style="left:1163px;top:434.02px;font-size:21px;line-height:21px;color:#4fb8e8;font-family:'Liberation Sans',sans-serif;font-weight:400;letter-spacing:0.082px;-webkit-text-stroke:0.2px currentColor;">html</div>
<div class="t" style="left:1227.6px;top:434.02px;font-size:21px;line-height:21px;color:#4fb8e8;font-family:'Liberation Sans',sans-serif;font-weight:400;letter-spacing:-0.010px;-webkit-text-stroke:0.2px currentColor;">body</div>
<div style="position:absolute;left:1153px;top:465px;width:769px;height:1.2px;background:#474747;"></div>
<div style="position:absolute;left:1153px;top:466px;width:769px;height:56px;background:#333333;"></div>
<div style="position:absolute;left:1153px;top:522px;width:769px;height:57px;background:#2b2b2b;"></div>
<div style="position:absolute;left:1156px;top:470px;width:90px;height:50px;background:#232323;border-radius:5px 5px 0 0;"></div>
<div style="position:absolute;left:1156px;top:517px;width:90px;height:3px;background:#0f7ad8;"></div>
<div class="t" style="left:1173px;top:484.22px;font-size:21px;line-height:21px;color:#ffffff;font-family:'Liberation Sans',sans-serif;font-weight:400;letter-spacing:-0.365px;-webkit-text-stroke:0.2px currentColor;">Styles</div>
<div class="t" style="left:1262.4px;top:484.22px;font-size:21px;line-height:21px;color:#c5c5c5;font-family:'Liberation Sans',sans-serif;font-weight:400;letter-spacing:0.088px;-webkit-text-stroke:0.2px currentColor;">Computed</div>
<div class="t" style="left:1396px;top:484.22px;font-size:21px;line-height:21px;color:#c5c5c5;font-family:'Liberation Sans',sans-serif;font-weight:400;letter-spacing:-0.175px;-webkit-text-stroke:0.2px currentColor;">Layout</div>
<div class="t" style="left:1492.8px;top:484.22px;font-size:21px;line-height:21px;color:#c5c5c5;font-family:'Liberation Sans',sans-serif;font-weight:400;letter-spacing:-0.190px;-webkit-text-stroke:0.2px currentColor;">Event Listeners</div>
<div class="t" style="left:1669px;top:484.22px;font-size:21px;line-height:21px;color:#c5c5c5;font-family:'Liberation Sans',sans-serif;font-weight:400;letter-spacing:-0.171px;-webkit-text-stroke:0.2px currentColor;">Properties</div>
<svg style="position:absolute;left:1800px;top:486px;" width="22" height="20" viewBox="0 0 22 20" fill="none"><path d="M3,2 L10,10 L3,18 M11,2 L18,10 L11,18" stroke="#c5c5c5" stroke-width="2"/></svg>
<div style="position:absolute;left:1156px;top:527px;width:505px;height:45px;background:#202124;border-radius:5px;"></div>
<div class="t" style="left:1163px;top:539.22px;font-size:21px;line-height:21px;color:#9aa0a6;font-family:'Liberation Sans',sans-serif;font-weight:400;letter-spacing:0.055px;-webkit-text-stroke:0.2px currentColor;">Filter</div>
<div class="t" style="left:1682px;top:542.44px;font-size:19px;line-height:19px;color:#ffffff;font-family:'Liberation Mono',monospace;font-weight:700;letter-spacing:-0.900px;">:hov</div>
<div class="t" style="left:1752px;top:542.44px;font-size:19px;line-height:19px;color:#ffffff;font-family:'Liberation Mono',monospace;font-weight:700;letter-spacing:-0.900px;">.cls</div>
<svg style="position:absolute;left:1819px;top:535px;" width="32" height="32" viewBox="0 0 32 32" fill="none"><path d="M16,2 V29 M2.5,16 H30" stroke="#e8e8e8" stroke-width="2.2"/><path d="M26,31.5 L32,31.5 L32,25 Z" fill="#ffffff"/></svg>
<svg style="position:absolute;left:1876px;top:536px;" width="33" height="25" viewBox="0 0 33 25" fill="none"><rect x="1.5" y="1.5" width="29" height="21" rx="3.5" stroke="#ffffff" stroke-width="2.2"/><rect x="20" y="1.5" width="10.5" height="21" fill="#ffffff"/><path d="M15,12 H6 M10,7.5 L5.5,12 L10,16.5" stroke="#ffffff" stroke-width="2"/></svg>
<div style="position:absolute;left:1153px;top:578px;width:769px;height:1.2px;background:#474747;"></div>
<div style="position:absolute;left:1153px;top:579px;width:769px;height:53px;background:#202124;"></div>
<div style="position:absolute;left:1167px;top:595px;width:19px;height:19px;background:#ffa400;border-radius:3px;"></div>
<svg style="position:absolute;left:1167px;top:595px;" width="19" height="19" viewBox="0 0 19 19" fill="none"><path d="M4.5,10 L8.3,13.8 L14.8,5.5" stroke="#303030" stroke-width="2.4"/></svg>
<div class="t" style="left:1197px;top:594.22px;font-size:21px;line-height:21px;color:#e8eaed;font-family:'Liberation Sans',sans-serif;font-weight:400;letter-spacing:-0.064px;-webkit-text-stroke:0.2px currentColor;">CSS mirror editing</div>
<div style="position:absolute;left:1524px;top:593px;width:2.2px;height:20px;background:#111;"></div>
<div class="t" style="left:1630px;top:590.72px;font-size:21px;line-height:21px;color:#4fb0ea;font-family:'Liberation Sans',sans-serif;font-weight:400;letter-spacing:-0.069px;-webkit-text-stroke:0.2px currentColor;text-decoration:underline;text-underline-offset:3px;white-space:nowrap;">Learn more about mirror editing</div>
<div style="position:absolute;left:1153px;top:632px;width:769px;height:1.2px;background:#474747;"></div>
<div class="dm" style="left:1158.7px;top:637.74px"><span style="color:#9aa0a6">element.style {</span></div>
<div class="dm" style="left:1158.7px;top:665.74px"><span style="color:#c5c5c5">}</span></div>
<div style="position:absolute;left:1153px;top:693px;width:769px;height:1.2px;background:#474747;"></div>
<div class="dm" style="left:1158.7px;top:701.44px"><span style="color:#d7c9a8">body</span><span style="color:#c5c5c5"> {</span></div>
<div class="dm" style="left:1805px;top:701.44px"><span style="color:#4fb0ea;text-decoration:underline;text-underline-offset:3px">base.css:1</span></div>
<div class="dm" style="left:1190.9px;top:727.74px"><span style="color:#5ec8f8">font–size</span><span style="color:#e8eaed">: calc(1em + 1vw);</span></div>
<div class="dm" style="left:1190.9px;top:753.44px"><span style="color:#5ec8f8">font–family</span><span style="color:#e8eaed">: &#x27;Segoe UI&#x27;, Tahoma, Geneva, Verdana, sans–serif;</span></div>
<div class="dm" style="left:1190.9px;top:778.44px"><span style="color:#5ec8f8">background</span><span style="color:#e8eaed">: </span></div>
<svg style="position:absolute;left:1326px;top:780px;" width="13" height="15" viewBox="0 0 13 15" fill="none"><path d="M1.5,1.5 L11.5,7.5 L1.5,13.5 Z" fill="#ffffff"/></svg>
<div style="position:absolute;left:1350px;top:780px;width:17px;height:16.5px;background:#5ec6fa;"></div>
<div class="dm" style="left:1372px;top:778.44px"><span style="color:#c5c5c5">lightskyblue;</span></div>
<div class="dm" style="left:1190.9px;top:800.94px"><span style="color:#5ec8f8">height</span><span style="color:#e8eaed">: 300vh;</span></div>
<div class="dm" style="left:1158.7px;top:825.44px"><span style="color:#c5c5c5">}</span></div>
<div style="position:absolute;left:1153px;top:852px;width:769px;height:1.2px;background:#474747;"></div>
<div style="position:absolute;left:1153px;top:853px;width:769px;height:109px;background:#333333;"></div>
<div class="dm" style="left:1158.7px;top:859.74px"><i style="color:#d7c9a8">body</i><i style="color:#c5c5c5"> {</i></div>
<div class="dm" style="left:1679px;top:859.74px"><i style="color:#9aa0a6">user agent stylesheet</i></div>
<div class="dm" style="left:1190.9px;top:885.84px"><i style="color:#5ec8f8">display</i><i style="color:#e8eaed">: block;</i></div>
<div class="dm" style="left:1190.9px;top:913.24px"><i style="color:#5ec8f8">margin</i><i style="color:#e8eaed">: </i></div>
<svg style="position:absolute;left:1280px;top:915px;" width="13" height="15" viewBox="0 0 13 15" fill="none"><path d="M1.5,1.5 L11.5,7.5 L1.5,13.5 Z" fill="#ffffff"/></svg>
<div class="dm" style="left:1302px;top:913.24px"><i style="color:#9aa0a6">8px;</i></div>
<div class="dm" style="left:1158.7px;top:934.24px"><i style="color:#c5c5c5">}</i></div>
<div style="position:absolute;left:1153px;top:962px;width:769px;height:1.2px;background:#474747;"></div>
<div style="position:absolute;left:4px;top:1032px;width:1918px;height:1px;background:#3a3a3a;"></div>
<div style="position:absolute;left:4px;top:994px;width:1918px;height:38px;background:#da5e1f;border-radius:0 0 11px 11px;"></div>
<svg style="position:absolute;left:30px;top:1001px;" width="26" height="28" viewBox="0 0 26 28" fill="none"><circle cx="6" cy="5" r="3.3" stroke="#fff" stroke-width="2"/><circle cx="18" cy="10" r="3.3" stroke="#fff" stroke-width="2"/><circle cx="6" cy="23" r="3.3" stroke="#fff" stroke-width="2"/><path d="M6,8.3 V19.7 M17.5,13.3 C17,17 12,17.5 9,18 L6.5,19.5" stroke="#fff" stroke-width="2"/></svg>
<div class="t" style="left:60px;top:1003.02px;font-size:21px;line-height:21px;color:#ffffff;font-family:'Liberation Sans',sans-serif;font-weight:400;letter-spacing:0.322px;-webkit-text-stroke:0.35px #fff;">main*</div>
<svg style="position:absolute;left:141px;top:1000px;" width="30" height="26" viewBox="0 0 30 26" fill="none"><path d="M5,11 A10,10 0 0 1 24,9 M25,15 A10,10 0 0 1 6,17" stroke="#fff" stroke-width="2"/><path d="M19.5,9.5 H25 V4 M10.5,16.5 H5 V22" stroke="#fff" stroke-width="2"/></svg>
<svg style="position:absolute;left:195px;top:1002px;" width="26" height="26" viewBox="0 0 26 26" fill="none"><circle cx="12.5" cy="12.5" r="10" stroke="#fff" stroke-width="2"/><path d="M8,8 L17,17 M17,8 L8,17" stroke="#fff" stroke-width="2"/></svg>
<div class="t" style="left:225px;top:1003.02px;font-size:21px;line-height:21px;color:#ffffff;font-family:'Liberation Sans',sans-serif;font-weight:400;letter-spacing:-0.680px;-webkit-text-stroke:0.35px #fff;">0</div>
<svg style="position:absolute;left:244px;top:1001px;" width="26" height="26" viewBox="0 0 26 26" fill="none"><path d="M13,2 L24,23 H2 Z" stroke="#fff" stroke-width="2" stroke-linejoin="round"/><path d="M13,9 V16" stroke="#fff" stroke-width="2"/><circle cx="13" cy="19.5" r="1.3" fill="#fff"/></svg>
<div class="t" style="left:274px;top:1003.02px;font-size:21px;line-height:21px;color:#ffffff;font-family:'Liberation Sans',sans-serif;font-weight:400;letter-spacing:-0.680px;-webkit-text-stroke:0.35px #fff;">0</div>
<svg style="position:absolute;left:314px;top:1001px;" width="26" height="26" viewBox="0 0 26 26" fill="none"><path d="M3,22 L14,11 M4,3 L9,8 L7,10 L12,15 L14,13 M23,3 Q18,4 17,9 L21,13 Q25,11 24,6 L21,9 L18,6 Z M12,15 L20,23 Q22,24 23,22 L16,15" stroke="#fff" stroke-width="1.8" stroke-linejoin="round"/></svg>
<div class="t" style="left:344px;top:1003.02px;font-size:21px;line-height:21px;color:#ffffff;font-family:'Liberation Sans',sans-serif;font-weight:400;letter-spacing:-1.680px;-webkit-text-stroke:0.35px #fff;">1</div>
<svg style="position:absolute;left:380px;top:1000px;" width="28" height="28" viewBox="0 0 28 28" fill="none"><path d="M10,4 L24,13 L12,20 M10,4 V10" stroke="#fff" stroke-width="1.8"/><ellipse cx="8" cy="19" rx="4" ry="5" stroke="#fff" stroke-width="1.8"/><path d="M2,19 H14 M3,13 L5,15 M13,13 L11,15 M3,25 L5,23 M13,25 L11,23" stroke="#fff" stroke-width="1.6"/></svg>
<div class="t" style="left:413px;top:1003.02px;font-size:21px;line-height:21px;color:#ffffff;font-family:'Liberation Sans',sans-serif;font-weight:400;letter-spacing:0.761px;-webkit-text-stroke:0.35px #fff;">webdebug (simple-to-do)</div>
<div class="t" style="left:1280.7px;top:1003.02px;font-size:21px;line-height:21px;color:#ffffff;font-family:'Liberation Sans',sans-serif;font-weight:400;letter-spacing:0.160px;-webkit-text-stroke:0.35px #fff;">Ln 34, Col 21</div>
<div class="t" style="left:1436px;top:1003.02px;font-size:21px;line-height:21px;color:#ffffff;font-family:'Liberation Sans',sans-serif;font-weight:400;letter-spacing:0.178px;-webkit-text-stroke:0.35px #fff;">Spaces: 2</div>
<div class="t" style="left:1559.6px;top:1003.02px;font-size:21px;line-height:21px;color:#ffffff;font-family:'Liberation Sans',sans-serif;font-weight:400;letter-spacing:0.521px;-webkit-text-stroke:0.35px #fff;">UTF-8</div>
<div class="t" style="left:1650px;top:1003.02px;font-size:21px;line-height:21px;color:#ffffff;font-family:'Liberation Sans',sans-serif;font-weight:400;letter-spacing:-0.754px;-webkit-text-stroke:0.35px #fff;">LF</div>
<div class="t" style="left:1701.7px;top:1003.02px;font-size:21px;line-height:21px;color:#ffffff;font-family:'Liberation Sans',sans-serif;font-weight:400;letter-spacing:-1.160px;-webkit-text-stroke:0.35px #fff;">CSS</div>
<svg style="position:absolute;left:1760px;top:996px;" width="150" height="34" viewBox="0 0 150 34" fill="none"><g stroke="#fff" stroke-width="2" fill="none"><circle cx="17.1" cy="10.9" r="3.9"/><circle cx="26.9" cy="10.9" r="3.9"/><path d="M13,14.5 Q10,17 10.3,21 Q11,26.5 22,27 Q33,26.5 33.7,21 Q34,17 31,14.5 M13.5,15 Q13,18 14,23 M30.5,15 Q31,18 30,23" /><path d="M19.5,18.5 V22.5 M25,18.5 V22.5" stroke-width="2.3"/><circle cx="70.5" cy="15.6" r="4.2"/><path d="M63.5,27.3 Q64,20.3 70.5,20.3 Q77,20.3 77.5,27.3 M69,9.5 V6.6 H84.6 V16.4 H81 L78.3,19.2 V16.4 H76.5"/><path d="M125.9,6.6 Q118.6,6.6 118.6,14.5 V19.5 L116.9,23.4 H134.8 L133.2,19.5 V14.5 Q133.2,6.6 125.9,6.6 Z M123.2,24 Q125.7,27.5 128.2,24" stroke-linejoin="round"/></g></svg>
<div style="position:absolute;left:1126px;top:560.6px;width:799px;height:89px;background:transparent;border:4.2px solid #ff2a00;box-sizing:border-box;"></div></body></html>
